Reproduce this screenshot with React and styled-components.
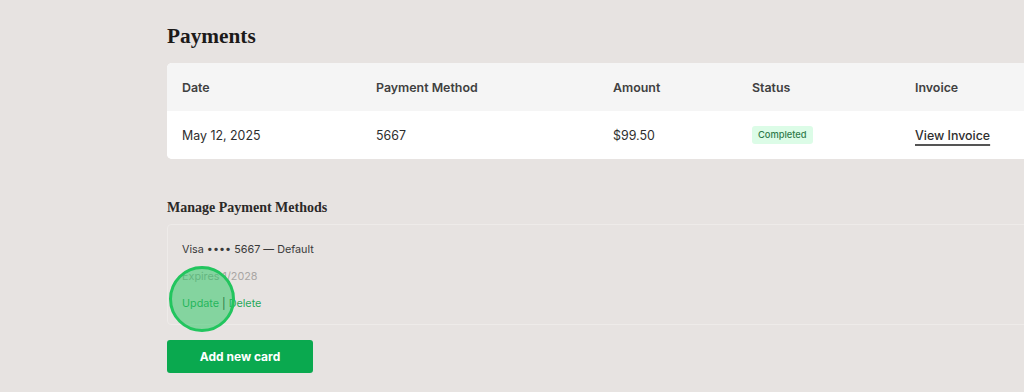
import React from "react";
import styled, { createGlobalStyle } from "styled-components";

const Global = createGlobalStyle`
  html, body { margin: 0; padding: 0; background: #e7e3e1; overflow: hidden; }
  body { font-family: Inter, "Noto Sans", sans-serif; }
`;

const Page = styled.div`
  width: 1024px;
  height: 392px;
  overflow: hidden;
  padding: 24px 0 0 167px;
  box-sizing: border-box;
`;

const Title = styled.h1`
  margin: 0 0 15px;
  font-family: "Liberation Serif", "DejaVu Serif", serif;
  font-weight: 700;
  font-size: 21.3px;
  line-height: 24px;
  color: #1c1a19;
`;

const Table = styled.div`
  width: 900px;
  border-radius: 5px;
  overflow: hidden;
  background: #fff;
`;

const Row = styled.div`
  display: grid;
  grid-template-columns: 194px 237px 139px 163px 1fr;
  padding-left: 15px;
  height: 48px;
  align-items: center;
  background: ${(p) => (p.$head ? "#f5f5f5" : "#ffffff")};
  font-size: 12.4px;
  font-weight: ${(p) => (p.$head ? 600 : 400)};
  color: ${(p) => (p.$head ? "#404040" : "#2e2e2e")};
`;

const Cell = styled.div`
  white-space: nowrap;
`;

const Badge = styled.span`
  display: inline-block;
  background: #dcfce7;
  color: #2f7a4a;
  font-size: 9.3px;
  font-weight: 500;
  padding: 3px 6px;
  border-radius: 3px;
  line-height: 12px;
`;

const InvoiceLink = styled.a`
  color: #2e2e2e;
  font-weight: 500;
  text-decoration: underline;
  text-decoration-thickness: 1.5px;
  text-underline-offset: 4px;
  text-decoration-color: #555;
`;

const SubTitle = styled.h2`
  margin: 41px 0 8px;
  font-family: "Liberation Serif", "DejaVu Serif", serif;
  font-weight: 700;
  font-size: 14px;
  line-height: 16px;
  color: #2b2928;
`;

const MethodCard = styled.div`
  position: relative;
  width: 900px;
  height: 101px;
  box-sizing: border-box;
  border: 1px solid #eeebe9;
  border-radius: 4px;
  padding: 17px 14px 0;
  display: flex;
  flex-direction: column;
  gap: 12px;
`;

const Line = styled.div`
  font-size: 10.8px;
  line-height: 15px;
  color: ${(p) => p.$color || "#3a3a3a"};
`;

const ActionLink = styled.span`
  color: #27a85a;
`;

const Sep = styled.span`
  color: #2a2a2a;
  margin: 0 3px;
`;

const ClickMark = styled.div`
  position: absolute;
  left: 1px;
  top: 41px;
  width: 66px;
  height: 66px;
  box-sizing: border-box;
  border-radius: 50%;
  border: 3px solid #22c55e;
  background: rgba(34, 197, 94, 0.5);
  pointer-events: none;
`;

const AddButton = styled.button`
  margin-top: 15px;
  width: 146px;
  height: 33px;
  border: none;
  border-radius: 3px;
  background: #0aa94f;
  color: #fff;
  font-family: Inter, sans-serif;
  font-weight: 700;
  font-size: 12px;
  cursor: pointer;
`;

export default function App() {
  return (
    <>
      <Global />
      <Page>
        <Title>Payments</Title>
        <Table>
          <Row $head>
            <Cell>Date</Cell>
            <Cell>Payment Method</Cell>
            <Cell>Amount</Cell>
            <Cell>Status</Cell>
            <Cell>Invoice</Cell>
          </Row>
          <Row>
            <Cell>May 12, 2025</Cell>
            <Cell>5667</Cell>
            <Cell>$99.50</Cell>
            <Cell>
              <Badge>Completed</Badge>
            </Cell>
            <Cell>
              <InvoiceLink>View Invoice</InvoiceLink>
            </Cell>
          </Row>
        </Table>
        <SubTitle>Manage Payment Methods</SubTitle>
        <MethodCard>
          <Line>Visa •••• 5667 — Default</Line>
          <Line $color="#a9a6a4">Expires 1/2028</Line>
          <Line>
            <ActionLink>Update</ActionLink>
            <Sep>|</Sep>
            <ActionLink>Delete</ActionLink>
          </Line>
          <ClickMark />
        </MethodCard>
        <AddButton>Add new card</AddButton>
      </Page>
    </>
  );
}
